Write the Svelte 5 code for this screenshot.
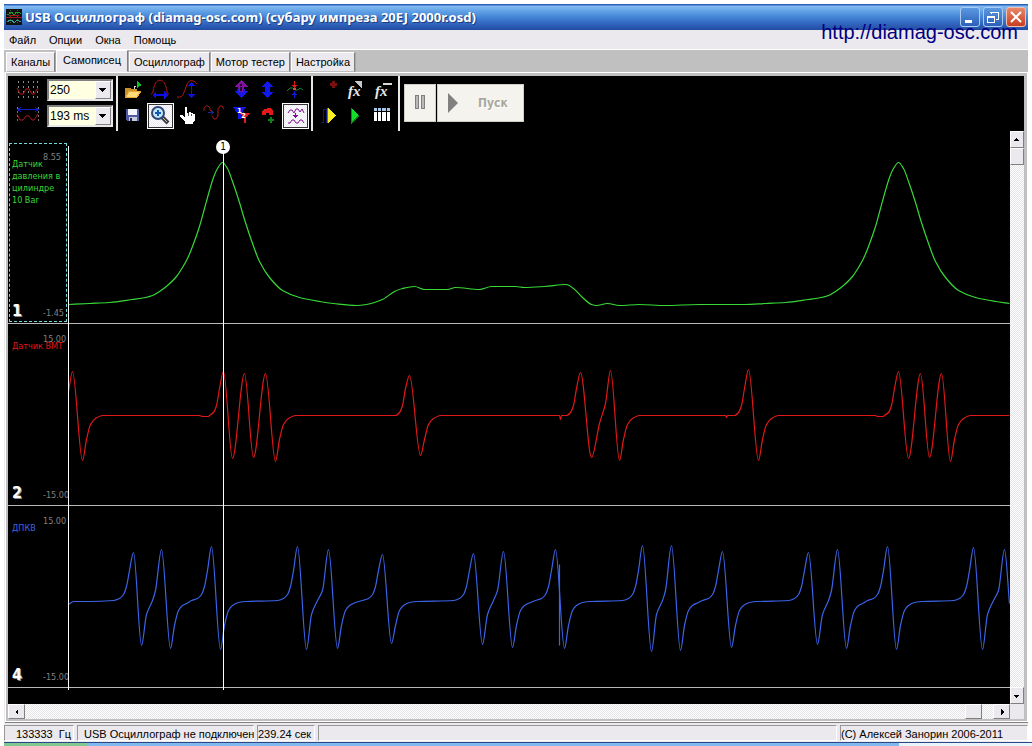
<script>
  const menu = ['Файл', 'Опции', 'Окна', 'Помощь'];
  const tabs = ['Каналы', 'Самописец', 'Осциллограф', 'Мотор тестер', 'Настройка'];

  let activeTab = $state('Самописец');
  let points = $state('250');
  let sweep = $state('193 ms');

  // each shape: d = path, f = fill, s = stroke, w = stroke width, t = text
  const scaleIcon = [
    { d: 'M2 1V19M7 1V19M12 1V19M17 1V19M21 1V19', s: '#8c8c8c', dash: '2 3' },
    { d: 'M1 8L4 14H7L10 9L13 9L16 14H18L22 8', s: '#b01818', smooth: true },
  ];
  const sweepIcon = [
    { d: 'M1.5 1V17M22.5 1V17', s: '#777', dash: '2 2' },
    { d: 'M2 3.5H22M5 1L2 3.5L5 6M19 1L22 3.5L19 6', s: '#1020d0' },
    { d: 'M1 8L4 14H7L10 10H13L16 14H18L22 8', s: '#b01818', smooth: true },
  ];

  const editTools = [
    { label: 'Открыть', shapes: [
      { d: 'M5 11H10L11 12H17V20H5Z', f: '#c89028' },
      { d: 'M6 20L9 14H21L17 20Z', f: '#ffd878', s: '#e8a838' },
      { d: 'M17 4L22 8L17 11Z', f: '#10c020' },
      { d: 'M14 12V9H16', s: '#d8d8d8' },
    ] },
    { label: 'Период', shapes: [
      { d: 'M4 17C6 17 6 14 7 10C9 1 17 1 19 10C20 14 20 17 22 17', s: '#b01818', smooth: true },
      { d: 'M5 18L9 14V17H17V14L21 18L17 22V19H9V22Z', f: '#1010e0' },
    ] },
    { label: 'Амплитуда', shapes: [
      { d: 'M3 20H6C9 20 10 15 12 10C14 4 16 3 19 4H20L23 7', s: '#b01818', smooth: true },
      { d: 'M17.5 5L21 9H18V17H21L17.5 21L14 17H17V9H14Z', f: '#1010e0' },
    ] },
    null,
    { label: 'Сдвиг каналов', shapes: [
      { d: 'M13 3L20 10H16V15H10V10H6Z', f: '#8010a0' },
      { d: 'M6 14H9V12H11V15H15V12H17V14H20L13 21Z', f: '#1818e8' },
      { d: 'M12 7H14V9H12ZM12 10H14V14H12Z', f: '#200828' },
    ] },
    { label: 'Масштаб', shapes: [
      { d: 'M12.5 4L18 9V10H15V15H18V16L12.5 21L7 16V15H10V10H7V9Z', f: '#1018f0' },
    ] },
    { label: 'Ноль', shapes: [
      { d: 'M5 14L8 11H11L13 13H16L18 11L21 13', s: '#108030', smooth: true },
      { d: 'M12.5 4V12M10 8.5H15M11 9.5H14', s: '#e01818' },
      { d: 'M12.5 21V14M10 17.5H15M11 16.5H14', s: '#1018e0' },
      { d: 'M11 12H14', s: '#d05050', w: 2 },
    ] },
    { label: 'Сохранить', shapes: [
      { d: 'M6 6H19V18H7L6 17Z', f: '#5058a0' },
      { d: 'M8 6H17V12H8Z', f: '#f4f4ff' },
      { d: 'M9 14H17V18H9Z', f: '#c8ccdc' },
      { d: 'M10 15H12V18H10Z', f: '#202050' },
    ] },
    { label: 'Лупа', pressed: true, shapes: [
      { d: 'M15 14L21 20', s: '#3c3c50', w: 4, smooth: true },
      { d: 'M16 15L20 19', s: '#e0c070', w: 1, smooth: true },
      { d: 'M5 10A6 6 0 1 0 17 10A6 6 0 1 0 5 10Z', f: '#c0e8f8', s: '#304878', w: 2, smooth: true },
      { d: 'M8 10H14M11 7V13', s: '#1858b0', w: 2 },
    ] },
    { label: 'Рука', shapes: [
      { d: 'M11 4H13V10H15V9H17V10H19V11H21V17L19 20V21H11V19L9 16L6 14V12H8L11 14Z', f: '#fff' },
      { d: 'M14.5 10V13M17.5 11V13', s: '#555' },
    ] },
    { label: 'Перенос', shapes: [
      { d: 'M3 8V5L5 3H7L9 5V7L11 9', s: '#a01818', smooth: true },
      { d: 'M7 9.5H12M10 7L12.5 9.5L10 12', s: '#182890' },
      { d: 'M11 13L13 16H15L17 13V6L19 3H21L23 6', s: '#b01818', smooth: true },
    ] },
    { label: 'Маркеры', shapes: [
      { d: 'M5 4H18L13 11V16H10V11Z', f: '#1018e8' },
      { d: 'M12 10H22L18 15V20H16V15Z', f: '#e81828' },
      { t: '1', x: 9, y: 10, f: '#fff' },
      { t: '2', x: 13, y: 15, f: '#fff' },
    ] },
    { label: 'Добавить маркер', shapes: [
      { d: 'M7 9L9 6H11L12 5H15L18 8V12H14V10H11V12H7Z', f: '#e81818' },
      { d: 'M16 14V20M13 17H19', s: '#108018', w: 2 },
    ] },
    { label: 'Наложение', pressed: true, shapes: [
      { d: 'M6 10L8 7H10L12 10L14 6H16L18 9L20 6L22 10', s: '#801090', smooth: true },
      { d: 'M6 20H8L10 17H12L14 20H16L18 17H20L22 20', s: '#801090', smooth: true },
      { d: 'M13.5 10V15M11 12.5H16M12 13.5H15', s: '#801090' },
    ] },
  ];

  const runTools = [
    { label: 'Метка', shapes: [{ d: 'M18.5 4V11M15 7.5H22', s: '#781010', w: 3 }] },
    { label: 'Функция', shapes: [
      { d: 'M13 4H20V12Z', f: '#c8c8c8' },
      { t: 'fx', x: 6, y: 19, f: '#e8e8e8', fx: true },
    ] },
    { label: 'Убрать функцию', shapes: [
      { d: 'M14 7H23', s: '#d8d8d8', w: 2 },
      { t: 'fx', x: 6, y: 19, f: '#e8e8e8', fx: true },
    ] },
    { label: 'Запись', shapes: [
      { d: 'M6 19H8V6H11V19H14', s: '#101880' },
      { d: 'M13 5V20L21 12.5Z', f: '#f8f020' },
      { d: 'M12.5 5V20', s: '#38883a' },
    ] },
    { label: 'Воспроизвести', shapes: [
      { d: 'M9 5V20L17 12.5Z', f: '#10e028' },
      { d: 'M9.5 5V20L17 12.5', s: '#108820' },
    ] },
    { label: 'Таблица', shapes: [
      { d: 'M5 5H8V8H5ZM9 5H12V8H9ZM13 5H17V8H13ZM18 5H21V8H18Z', f: '#a8c8e8' },
      { d: 'M5 9H8V18H5ZM9 9H12V18H9ZM13 9H17V18H13ZM18 9H21V18H18Z', f: '#fff' },
    ] },
  ];

  // pressure wave: one compression stroke, repeated after a full cycle
  const stroke = [
    [69, 304], [90, 303], [110, 302], [133, 299], [146, 297], [153, 295], [160, 291], [168, 285],
    [177, 276], [183, 267], [188, 258], [193, 246], [200, 226], [205, 208], [210, 190], [214, 177],
    [218, 168], [223, 162], [228, 168], [233, 181], [240, 202], [245, 219], [252, 240], [260, 261],
    [270, 277], [283, 290], [300, 297], [320, 301], [334, 303],
  ];
  const pressure = [
    ...stroke,
    [357, 305], [367, 304], [383, 299], [395, 291], [403, 288], [415, 286], [425, 289], [448, 289],
    [456, 287], [480, 289], [492, 286], [516, 286], [525, 287], [545, 286], [567, 284], [574, 288],
    [583, 297], [592, 304], [597, 305], [608, 303], [620, 305], [640, 304], [665, 305], [700, 304],
    ...stroke.map(([x, y]) => [x + 676, y]),
  ];

  const lead = (x, top) => [[x - 14, 415], [x - 10, 412], [x - 7, 405], [x - 4, 388], [x, top]];
  const tail = (x, low) => [[x, low], [x + 4, 439], [x + 8, 424], [x + 13, 418], [x + 20, 415]];

  const tdc = [
    [69, 391], [73, 371], ...tail(83, 460),
    [200, 415], [203, 416], [209, 416], ...lead(224, 371),
    [233, 458], [245, 373], [254, 457], [266, 373], ...tail(276, 461),
    ...lead(410, 375), ...tail(421, 455),
    [560, 415], [561, 419], [562, 415], ...lead(581, 372),
    [592, 457], [600, 423], [606, 403], [611, 370], ...tail(620, 460),
    [726, 415], [727, 417], [728, 415], ...lead(749, 369), ...tail(759, 460),
    [876, 415], [878, 416], [884, 416], ...lead(899, 371),
    [909, 458], [921, 373], [930, 457], [942, 373], ...tail(951, 461),
    [1010, 415],
  ];

  // crank teeth: [peak x, peak y, trough x, trough y], pairs run into each other
  const teeth = [
    [134, 552, 142, 645], [162, 549, 171, 648], [212, 546, 221, 649], [298, 546, 307, 649],
    [329, 549, 338, 648], [383, 554, 392, 643], [474, 553, 483, 644], [504, 551, 513, 647],
    [556, 549, 565, 648], [643, 545, 652, 651], [672, 545, 681, 650], [723, 551, 732, 647],
    [809, 552, 818, 644], [838, 549, 847, 648], [888, 546, 897, 649], [974, 547, 983, 649],
  ];
  const crank = [[69, 604], [74, 601], [90, 601]];
  teeth.forEach(([px, py, tx, ty], i) => {
    const prev = teeth[i - 1];
    if (prev && px - prev[2] < 24) crank.push([px - 6, 590]);
    else crank.push([px - 20, 600], [px - 14, 598], [px - 10, 594], [px - 7, 586], [px - 4, 570]);
    crank.push([px, py], [tx, ty]);
    const next = teeth[i + 1]?.[0] ?? 1005;
    if (next - tx < 24) crank.push([tx + 5, 614], [tx + 11, 600]);
    else crank.push([tx + 4, 625], [tx + 8, 610], [tx + 12, 605], [tx + 18, 602]);
    if (next - tx > 60) crank.push([tx + 26, 601]);
  });
  crank.push([999, 590], [1005, 549], [1010, 603]);

  const channels = [
    { id: 1, name: 'Датчик давления в цилиндре 10\u00a0Bar', max: '8.55', min: '-1.45', color: '#38d838', data: pressure, selected: true },
    { id: 2, name: 'Датчик ВМТ', max: '15.00', min: '-15.00', color: '#e01818', data: tdc },
    { id: 4, name: 'ДПКВ', max: '15.00', min: '-15.00', color: '#3c64e8', data: crank, glitch: 'M560 564V645' },
  ];

  // monotone cubic through the samples
  function curve(pts) {
    const n = pts.length;
    const slope = [];
    for (let i = 0; i < n - 1; i++) {
      slope.push((pts[i + 1][1] - pts[i][1]) / (pts[i + 1][0] - pts[i][0]));
    }
    const m = pts.map((_, i) => {
      if (i === 0) return slope[0];
      if (i === n - 1) return slope[n - 2];
      const a = slope[i - 1];
      const b = slope[i];
      return a * b <= 0 ? 0 : (2 * a * b) / (a + b);
    });
    let d = `M${pts[0][0]} ${pts[0][1]}`;
    for (let i = 0; i < n - 1; i++) {
      const [x0, y0] = pts[i];
      const [x1, y1] = pts[i + 1];
      const h = (x1 - x0) / 3;
      d += `C${x0 + h} ${y0 + m[i] * h} ${x1 - h} ${y1 - m[i + 1] * h} ${x1} ${y1}`;
    }
    return d;
  }
</script>

{#snippet icon(shapes, w, h)}
  <svg class="icon" width={w} height={h} viewBox="0 0 {w} {h}" aria-hidden="true">
    {#each shapes as p}
      {#if p.t}
        <text class={p.fx ? 'fx' : 'digit'} x={p.x} y={p.y} fill={p.f}>{p.t}</text>
      {:else}
        <path
          d={p.d}
          fill={p.f ?? 'none'}
          stroke={p.s ?? 'none'}
          stroke-width={p.w ?? 1}
          stroke-dasharray={p.dash}
          shape-rendering={p.smooth ? 'auto' : 'crispEdges'}
        />
      {/if}
    {/each}
  </svg>
{/snippet}

{#snippet tool(b)}
  {#if b}
    <button class="tool" class:pressed={b.pressed} aria-label={b.label}>{@render icon(b.shapes, 27, 26)}</button>
  {:else}
    <span></span>
  {/if}
{/snippet}

{#snippet arrow(d)}
  <svg width="8" height="8" viewBox="0 0 8 8" shape-rendering="crispEdges" aria-hidden="true"><path {d} /></svg>
{/snippet}

<div class="window">
  <header class="titlebar">
    <svg width="16" height="16" viewBox="0 0 16 16" shape-rendering="crispEdges" aria-hidden="true">
      <path d="M0 0H16V16H0Z" fill="#101010" />
      <path d="M1 5H3L4 3H6L7 5H9L10 3H13L15 5" fill="none" stroke="#20a020" />
      <path d="M0 8.5H16M3 6.5H13" stroke="#a01818" />
      <path d="M1 13L4 11H6L8 14L11 11L15 13" fill="none" stroke="#30a0a0" />
      <path d="M4.5 1V15M11.5 1V15" stroke="#386038" stroke-dasharray="1 2" />
    </svg>
    <h1>USB Осциллограф (diamag-osc.com) (субару импреза 20EJ 2000r.osd)</h1>
    <div class="controls">
      <button aria-label="Свернуть"><svg width="18" height="18" viewBox="0 0 18 18"><path d="M4 13.5H11" stroke="#fff" stroke-width="3" /></svg></button>
      <button aria-label="Восстановить"><svg width="18" height="18" viewBox="0 0 18 18" shape-rendering="crispEdges"><path d="M3.5 8.5H10.5V14.5H3.5ZM3 9H11M7 6V4.5H14.5V11H12M6 4H15" fill="none" stroke="#fff" /></svg></button>
      <button class="close" aria-label="Закрыть"><svg width="18" height="18" viewBox="0 0 18 18"><path d="M4 4L14 14M14 4L4 14" stroke="#fff" stroke-width="2" /></svg></button>
    </div>
  </header>
  <a class="site" href="http://diamag-osc.com">http://diamag-osc.com</a>

  <nav class="menu">
    {#each menu as item}
      <button>{item}</button>
    {/each}
  </nav>

  <div class="tabs" role="tablist">
    {#each tabs as tab}
      <button role="tab" class:active={tab === activeTab} aria-selected={tab === activeTab} onclick={() => (activeTab = tab)}>{tab}</button>
    {/each}
  </div>

  <main class="page">
    <div class="toolbar">
      <div class="settings">
        {@render icon(scaleIcon, 24, 20)}
        <span class="combo">
          <select aria-label="Точек" bind:value={points}>
            <option>250</option>
            <option>500</option>
          </select>
          <span class="drop">{@render arrow('M0 2H7L4 6H3Z')}</span>
        </span>
        {@render icon(sweepIcon, 24, 20)}
        <span class="combo">
          <select aria-label="Развёртка" bind:value={sweep}>
            <option>193 ms</option>
            <option>386 ms</option>
          </select>
          <span class="drop">{@render arrow('M0 2H7L4 6H3Z')}</span>
        </span>
      </div>
      <div class="tools seven">
        {#each editTools as b}{@render tool(b)}{/each}
      </div>
      <div class="tools three">
        {#each runTools as b}{@render tool(b)}{/each}
      </div>
      <div class="run">
        <button class="pause" aria-label="Пауза" disabled>
          <svg width="12" height="16" viewBox="0 0 12 16" shape-rendering="crispEdges"><path d="M1.5 1.5H4.5V14.5H1.5ZM7.5 1.5H10.5V14.5H7.5Z" fill="#b8b8b8" stroke="#808080" /></svg>
        </button>
        <button class="start" disabled>
          <svg width="12" height="20" viewBox="0 0 12 20"><path d="M1 0V20L11 10Z" fill="#808080" /></svg>
          <span>Пуск</span>
        </button>
      </div>
    </div>

    <div class="view">
      <div class="plots">
        {#each channels as ch, i}
          <section class="channel">
            <div class="side" class:selected={ch.selected}>
              <span class="max">{ch.max}</span>
              <span class="name" style="color: {ch.color}">{ch.name}</span>
              <span class="num">{ch.id}</span>
              <span class="min">{ch.min}</span>
            </div>
            <svg class="wave" viewBox="68.5 {141.5 + 182 * i} 942 181" preserveAspectRatio="none">
              <path d={curve(ch.data)} style="stroke: {ch.color}" />
              {#if ch.glitch}<path d={ch.glitch} style="stroke: {ch.color}" />{/if}
            </svg>
          </section>
        {/each}
        <div class="overlay">
          <div class="cursor" style="left: {(154 / 941) * 100}%"><span>1</span></div>
        </div>
      </div>
      <div class="vscroll">
        <button aria-label="Вверх">{@render arrow('M1 5H6L4 2H3Z')}</button>
        <span class="thumb"></span>
        <button class="last" aria-label="Вниз">{@render arrow('M1 3H6L4 6H3Z')}</button>
      </div>
    </div>

    <div class="hscroll">
      <button aria-label="Влево">{@render arrow('M5 1V7L2 4Z')}</button>
      <span class="thumb"></span>
      <button aria-label="Вправо">{@render arrow('M3 1V7L6 4Z')}</button>
      <span class="grip"></span>
    </div>
  </main>

  <footer class="status">
    <span class="rate">133333&nbsp; Гц</span>
    <span class="link">USB Осциллограф не подключен</span>
    <span class="time">239.24 сек</span>
    <span class="fill"></span>
    <span class="author">(C) Алексей Занорин 2006-2011</span>
  </footer>
</div>
<div class="taskbar"><span class="startmenu"></span><span class="tray"></span></div>

<style>
  :global(body) {
    background: #fff;
  }

  :global(#app) {
    display: flex;
    flex-direction: column;
    height: 100vh;
    min-height: 520px;
    font: 11px 'Liberation Sans', Arial, sans-serif;
    color: #000;
  }

  button {
    font: inherit;
    color: inherit;
    margin: 0;
    padding: 0;
    border: 0;
    background: none;
  }

  .window {
    position: relative;
    flex: 1;
    min-height: 0;
    margin: 4px 4px 0;
    display: flex;
    flex-direction: column;
    background: #ebe9ed;
  }

  .titlebar {
    height: 26px;
    display: flex;
    align-items: center;
    gap: 3px;
    padding: 0 2px;
    box-sizing: border-box;
    background: linear-gradient(#2a60b8 0, #2a60b8 1px, #84bcf4 2px, #62a2e6 7px, #4080d4 14px, #3468c0 19px, #2450a8 25px, #20489c);
  }

  h1 {
    flex: 1;
    margin: 0;
    font: bold 13px 'Noto Sans', 'Trebuchet MS', sans-serif;
    color: #fff;
    text-shadow: 1px 1px #1c3c80;
    white-space: nowrap;
  }

  .controls {
    display: flex;
    gap: 3px;
  }

  .controls button {
    width: 20px;
    height: 20px;
    display: grid;
    place-items: center;
    border: 1px solid #a8ccf4;
    border-radius: 3px;
    box-sizing: border-box;
    background: linear-gradient(#5c98e0, #2c60b8);
  }

  .controls .close {
    background: linear-gradient(#e88868, #c84020);
    border-color: #f0c0b0;
  }

  .site {
    position: absolute;
    top: 16px;
    right: 10px;
    font: 20px/24px 'Liberation Sans', Arial, sans-serif;
    color: #000080;
    text-decoration: none;
  }

  .menu {
    height: 19px;
    display: flex;
    align-items: center;
    gap: 13px;
    padding-left: 5px;
    border-bottom: 1px solid #fff;
  }

  .tabs {
    height: 22px;
    display: flex;
    align-items: flex-end;
    padding-left: 2px;
    gap: 1px;
    background: #c0c0c0;
  }

  .tabs button {
    height: 20px;
    padding: 0 4px;
    background: #ebe9ed;
    border: 1px solid;
    border-color: #fff #808080 #c0c0c0 #fff;
    box-shadow: 1px 0 #a8a8a8;
    box-sizing: border-box;
    white-space: nowrap;
  }

  .tabs .active {
    height: 22px;
    padding: 0 6px 2px;
    border-bottom-color: #ebe9ed;
  }

  .page {
    flex: 1;
    min-height: 0;
    display: flex;
    flex-direction: column;
    margin-left: 1px;
    border: solid #c0c0c0;
    border-width: 4px 4px 3px 3px;
    box-shadow: 0 1px #808080;
    outline: 1px solid #fff;
    outline-offset: -1px;
    background: #000;
  }

  .toolbar {
    height: 55px;
    flex: none;
    display: flex;
  }

  .settings {
    display: grid;
    grid-template-columns: 24px 66px;
    grid-template-rows: 22px 22px;
    gap: 4px 7px;
    padding: 3px 3px 0 8px;
    align-items: center;
    border-right: 2px solid #e8e8e8;
  }

  .icon {
    display: block;
  }

  .fx {
    font: italic bold 15px 'Liberation Serif', serif;
  }

  .digit {
    font: bold 7px 'DejaVu Sans', sans-serif;
  }

  .combo {
    position: relative;
    display: block;
    height: 22px;
  }

  .combo select {
    appearance: none;
    width: 100%;
    height: 100%;
    padding: 0 1px;
    font: inherit;
    font-size: 12px;
    color: #000;
    background: #ffffe1;
    border: 2px solid;
    border-color: #808080 #e8e8e8 #e8e8e8 #808080;
    border-radius: 0;
    box-sizing: border-box;
  }

  .drop {
    position: absolute;
    top: 2px;
    right: 2px;
    bottom: 2px;
    width: 16px;
    display: grid;
    place-items: center;
    pointer-events: none;
  }

  .drop,
  .vscroll button,
  .hscroll button,
  .thumb {
    background: #ebe9ed;
    border: 1px solid;
    border-color: #fff #808080 #808080 #fff;
    box-sizing: border-box;
  }

  .tools {
    display: grid;
    grid-template-rows: 26px 26px;
    padding: 1px 2px 0;
    border-right: 2px solid #e8e8e8;
  }

  .seven {
    grid-template-columns: repeat(7, 27px);
  }

  .three {
    grid-template-columns: repeat(3, 27px);
  }

  .tool.pressed {
    background: repeating-conic-gradient(#fff 0 25%, #ece8f4 0 50%) 0 0 / 2px 2px;
    box-shadow: inset 0 0 0 1px #fff, inset 0 0 0 2px #303030;
  }

  .run {
    display: flex;
    gap: 1px;
    padding: 8px 4px;
  }

  .run button {
    height: 38px;
    background: #f4f3ee;
    border: 1px solid #d0cec4;
    box-sizing: border-box;
  }

  .pause {
    width: 32px;
  }

  .start {
    width: 87px;
    display: flex;
    align-items: center;
    gap: 19px;
  }

  .run .start {
    padding-left: 9px;
    font: bold 12px 'DejaVu Sans Condensed', sans-serif;
    color: #a8a8a0;
    text-shadow: 1px 1px #fff;
  }

  .view {
    flex: 1;
    min-height: 0;
    display: flex;
  }

  .plots {
    position: relative;
    flex: 1;
    min-width: 0;
    display: flex;
    flex-direction: column;
    padding: 11px 0 16px;
    font-family: 'DejaVu Sans Condensed', 'DejaVu Sans', sans-serif;
  }

  .channel {
    flex: 1;
    min-height: 0;
    display: flex;
    border-bottom: 1px solid #b8b8b8;
  }

  .side {
    width: 60px;
    flex: none;
    display: grid;
    grid-template: 1fr / 1fr;
    box-sizing: border-box;
    font-size: 9px;
    line-height: 12px;
  }

  .side > * {
    grid-area: 1 / 1;
  }

  .selected {
    outline: 1px dashed #70d8d8;
    outline-offset: -2px;
  }

  .max,
  .min {
    margin-left: 35px;
    color: #808080;
  }

  .max {
    padding-top: 9px;
  }

  .name {
    padding: 16px 0 0 4px;
  }

  .num {
    align-self: end;
    padding: 0 0 2px 4px;
    font: bold 16px/20px 'DejaVu Sans Condensed', sans-serif;
    color: #fff;
    text-shadow: 1px 1px #888;
  }

  .min {
    align-self: end;
    padding-bottom: 4px;
  }

  .wave {
    flex: 1;
    min-width: 0;
    height: 100%;
  }

  .wave path {
    fill: none;
    stroke-width: 1.2;
    vector-effect: non-scaling-stroke;
  }

  .overlay {
    position: absolute;
    top: 15px;
    right: 0;
    bottom: 14px;
    left: 60px;
    border-left: 1px solid #fff;
    pointer-events: none;
  }

  .cursor {
    position: absolute;
    top: -5px;
    bottom: 0;
    width: 1px;
    background: #fff;
  }

  .cursor span {
    position: absolute;
    top: -1px;
    left: -7px;
    width: 14px;
    height: 14px;
    border-radius: 50%;
    background: #fff;
    font-size: 10px;
    line-height: 14px;
    text-align: center;
  }

  .vscroll,
  .hscroll {
    flex: none;
    display: flex;
    background: repeating-conic-gradient(#fff 0 25%, #e4e4e6 0 50%) 0 0 / 2px 2px;
  }

  .vscroll {
    width: 14px;
    flex-direction: column;
  }

  .vscroll button,
  .vscroll .thumb {
    height: 17px;
    display: grid;
    place-items: center;
  }

  .vscroll .last {
    margin-top: auto;
  }

  .hscroll {
    height: 15px;
  }

  .hscroll button,
  .hscroll .thumb {
    width: 17px;
    display: grid;
    place-items: center;
  }

  .hscroll .thumb {
    margin-left: auto;
    margin-right: 11px;
  }

  .grip {
    width: 14px;
    background: #ebe9ed;
  }

  .status {
    flex: none;
    height: 16px;
    display: flex;
    gap: 3px;
    padding: 3px 0 1px;
    line-height: 16px;
    white-space: nowrap;
  }

  .status span {
    border: 1px solid;
    border-color: #989898 #fff #fff #989898;
    box-sizing: border-box;
  }

  .rate {
    width: 70px;
    text-align: right;
    padding-right: 2px;
  }

  .link {
    width: 177px;
    padding-left: 6px;
  }

  .time {
    width: 58px;
  }

  .fill {
    flex: 1;
  }

  .author {
    width: 188px;
  }

  .taskbar {
    height: 4px;
    flex: none;
    display: flex;
    justify-content: space-between;
    margin-left: 4px;
    background: #80b8f0;
    border-top: 1px solid #284888;
    box-sizing: border-box;
  }

  .startmenu {
    width: 84px;
    background: #80c890;
  }

  .tray {
    width: 133px;
    background: #e8f4fc;
  }
</style>
